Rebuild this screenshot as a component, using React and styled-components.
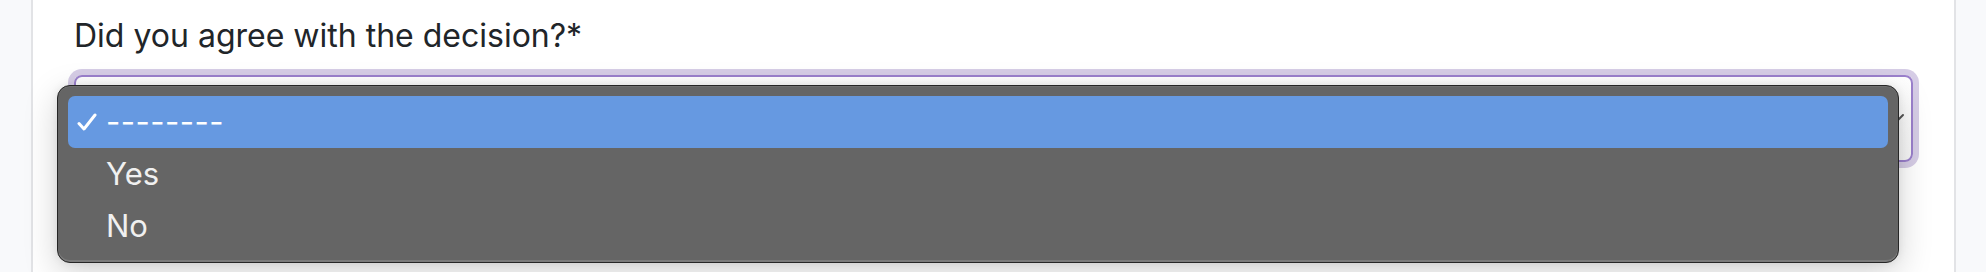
import React from "react";
import styled, { createGlobalStyle } from "styled-components";

const Global = createGlobalStyle`
  html, body { margin: 0; padding: 0; }
  body {
    background: #f8f9fb;
    font-family: Inter, "Noto Sans", sans-serif;
    -webkit-font-smoothing: antialiased;
  }
`;

const Page = styled.div`
  display: flex;
  height: 272px;
  overflow: hidden;
  background: #f8f9fb;
`;

const Gutter = styled.div`
  width: ${(p) => p.$w}px;
  flex: none;
  background: #f8f9fb;
`;

const Panel = styled.main`
  flex: 1;
  background: #ffffff;
  border-left: 2px solid #e2e3e6;
  border-right: 2px solid #e2e3e6;
  padding: 13px 40px 0 40px;
`;

const Field = styled.div`
  display: flex;
  flex-direction: column;
  gap: 16px;
`;

const Label = styled.label`
  font-size: 32px;
  line-height: 46px;
  color: #212529;
  padding-left: 1px;
`;

const SelectWrap = styled.div`
  position: relative;
  margin-left: 1px;
  margin-right: 1px;
`;

const SelectBox = styled.div`
  height: 87px;
  box-sizing: border-box;
  border: 2px solid #9b80cc;
  border-radius: 8px;
  box-shadow: 0 0 0 6px #d6cde6;
  background: linear-gradient(#ffffff, #f7f7f7);
  display: flex;
  align-items: center;
  justify-content: flex-end;
  padding-right: 6px;
  color: #4a4a4a;
`;

const Popup = styled.ul`
  position: absolute;
  left: -17px;
  top: 10px;
  width: 1842px;
  box-sizing: border-box;
  margin: 0;
  padding: 10px;
  list-style: none;
  background: #656565;
  border: 1px solid #262626;
  border-radius: 13px;
  box-shadow: inset 0 -2px 0 #7a7a7a, inset 0 1px 0 #707070,
    0 10px 34px rgba(0, 0, 0, 0.18), 0 0 8px rgba(0, 0, 0, 0.08);
  font-family: Inter, "Noto Sans", sans-serif;
  font-size: 31px;
  color: #f2f2f2;
`;

const Option = styled.li`
  height: 52px;
  box-sizing: border-box;
  padding-bottom: 2px;
  display: flex;
  align-items: center;
  border-radius: 7px;
  padding-left: 9px;
  background: ${(p) => (p.$active ? "#6699e1" : "transparent")};
  color: ${(p) => (p.$active ? "#ffffff" : "#f0f0f0")};
`;

const Check = styled.span`
  width: 29px;
  flex: none;
  display: flex;
  align-items: center;
  padding-top: 2px;
`;

const Text = styled.span`
  letter-spacing: ${(p) => (p.$dashes ? "0.5px" : "0")};
`;

const CheckIcon = () => (
  <svg width="20" height="18" viewBox="0 0 20 18" fill="none">
    <path
      d="M2 10.5 L7 16 L18 2"
      stroke="#ffffff"
      strokeWidth="3"
      strokeLinecap="round"
      strokeLinejoin="round"
    />
  </svg>
);

const Chevron = () => (
  <svg width="18" height="12" viewBox="0 0 18 12" fill="none">
    <path d="M2 2 L9 9 L16 2" stroke="#555" strokeWidth="2" strokeLinecap="round" />
  </svg>
);

const options = [
  { label: "--------", active: true },
  { label: "Yes" },
  { label: "No" },
];

export default function App() {
  return (
    <>
      <Global />
      <Page>
        <Gutter $w={31} />
        <Panel>
          <Field>
            <Label>Did you agree with the decision?*</Label>
            <SelectWrap>
              <SelectBox>
                <Chevron />
              </SelectBox>
              <Popup>
                {options.map((o) => (
                  <Option key={o.label} $active={o.active}>
                    <Check>{o.active ? <CheckIcon /> : null}</Check>
                    <Text $dashes={o.active}>{o.label}</Text>
                  </Option>
                ))}
              </Popup>
            </SelectWrap>
          </Field>
        </Panel>
        <Gutter $w={30} />
      </Page>
    </>
  );
}
